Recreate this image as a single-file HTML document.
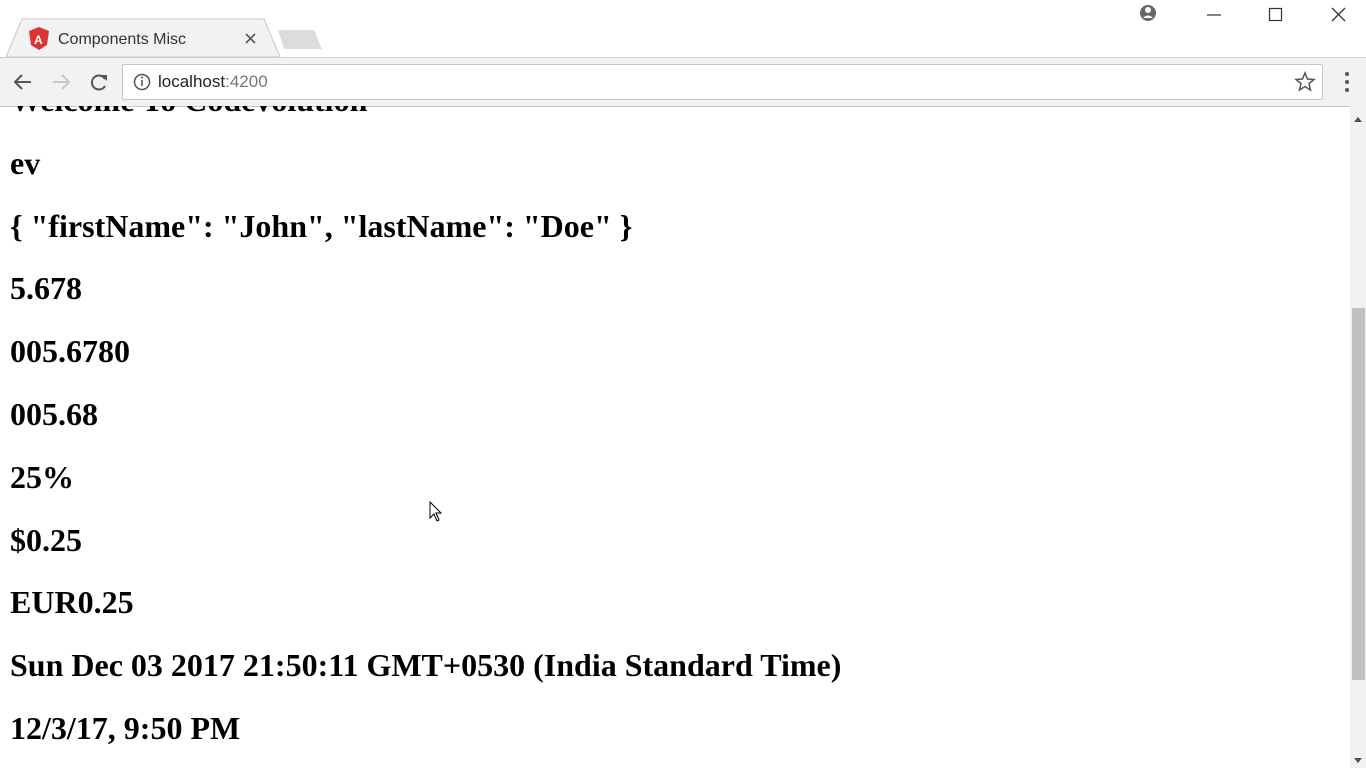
<!DOCTYPE html>
<html><head><style>
body{margin:0;width:1366px;height:768px;overflow:hidden;background:#fff;position:relative;font-family:"Liberation Sans",sans-serif}
#top{position:absolute;left:0;top:0;width:1366px;height:57px;background:#fff}
#toolbar{position:absolute;left:0;top:57px;width:1366px;height:48px;background:#f2f2f2;border-top:1px solid #d0d0d0;border-bottom:1px solid #c8c8c8}
#omni{position:absolute;left:122px;top:6px;width:1199px;height:34px;background:#fff;border:1px solid #c6c6c6;border-radius:2px}
#content{position:absolute;left:0;top:106px;width:1350px;height:662px;overflow:hidden}
#lines{position:absolute;left:10px;top:-37px;font-family:"Liberation Serif",serif;font-weight:bold;font-size:32px;line-height:62.8px;color:#000;white-space:nowrap}
#sb{position:absolute;left:1350px;top:106px;width:16px;height:662px;background:#f1f1f1}
#thumb{position:absolute;left:2px;top:202px;width:13px;height:372px;background:#c1c1c1}
</style></head><body>
<div id="top">
<svg width="1366" height="58" style="position:absolute;left:0;top:0">
<path d="M6 57 L22 19 L264 19 L280 57 Z" fill="#f2f2f2" stroke="#c8c8c8"/>
<path d="M278 30 L314 30 L322 49 L284 49 Z" fill="#dcdcdc"/>
<path d="M39 27 L49 31 L47 45 L39 50 L31 45 L29 31 Z" fill="#dd3333"/>
<text x="34" y="44" font-family="Liberation Sans" font-size="12" font-weight="bold" fill="#fff">A</text>
<text x="58" y="44" font-family="Liberation Sans" font-size="16" fill="#333">Components Misc</text>
<path d="M246 34 L255 43 M255 34 L246 43" stroke="#555" stroke-width="1.6"/>
<circle cx="1148" cy="13" r="8" fill="#666"/><circle cx="1148" cy="10" r="3" fill="#fff"/><path d="M1143 18 Q1148 13 1153 18" fill="#fff"/>
<path d="M1207 15 H1221" stroke="#333" stroke-width="1.2"/>
<rect x="1269.5" y="8.5" width="12" height="12" fill="none" stroke="#333" stroke-width="1.2"/>
<path d="M1332 8 L1345 21 M1345 8 L1332 21" stroke="#333" stroke-width="1.3"/>
</svg></div>
<div id="toolbar">
<svg width="120" height="48" style="position:absolute;left:0;top:0">
<path d="M15 24 H31 M22 17 L15 24 L22 31" stroke="#555" stroke-width="2" fill="none"/>
<path d="M53 24 H69 M62 17 L69 24 L62 31" stroke="#c8c8c8" stroke-width="2" fill="none"/>
<path d="M105 21 A7 7 0 1 0 105 28" stroke="#555" stroke-width="2" fill="none"/><path d="M101 17 L107 17 L107 23 Z" fill="#555"/>
</svg>
<div id="omni">
<svg width="30" height="34" style="position:absolute;left:6px;top:0"><circle cx="13" cy="17" r="7.5" stroke="#555" stroke-width="1.5" fill="none"/><path d="M13 15 V21" stroke="#555" stroke-width="1.6"/><circle cx="13" cy="12.5" r="1" fill="#555"/></svg>
<div style="position:absolute;left:35px;top:7px;font-size:17px;color:#222">localhost<span style="color:#777">:4200</span></div>
<svg width="24" height="34" style="position:absolute;left:1170px;top:0"><path d="M12 8 L14.5 14 L21 14.5 L16 18.5 L17.5 25 L12 21.5 L6.5 25 L8 18.5 L3 14.5 L9.5 14 Z" fill="none" stroke="#555" stroke-width="1.5"/></svg>
</div>
<svg width="20" height="48" style="position:absolute;left:1337px;top:0"><circle cx="10" cy="16" r="2" fill="#555"/><circle cx="10" cy="24" r="2" fill="#555"/><circle cx="10" cy="32" r="2" fill="#555"/></svg>
</div>
<div id="content"><div id="lines">
<div>Welcome To Codevolution</div>
<div>ev</div>
<div>{ "firstName": "John", "lastName": "Doe" }</div>
<div>5.678</div>
<div>005.6780</div>
<div>005.68</div>
<div>25%</div>
<div>$0.25</div>
<div>EUR0.25</div>
<div>Sun Dec 03 2017 21:50:11 GMT+0530 (India Standard Time)</div>
<div>12/3/17, 9:50 PM</div>
</div></div>
<div id="sb"><svg width="16" height="662" style="position:absolute;left:0;top:0"><path d="M4 16 L8 11 L12 16 Z" fill="#505050"/><path d="M4 652 L8 657 L12 652 Z" fill="#505050"/></svg><div id="thumb"></div></div>
<svg width="16" height="24" style="position:absolute;left:429px;top:501px"><path d="M1 1 L1 17 L5 13 L8 20 L10 19 L7 12 L12 12 Z" fill="#fff" stroke="#000" stroke-width="1"/></svg>
</body></html>
